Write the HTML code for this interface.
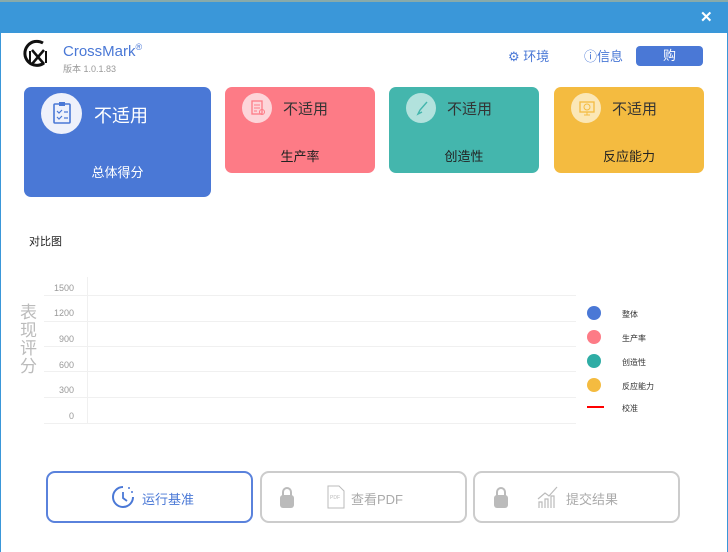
<!DOCTYPE html>
<html><head><meta charset="utf-8"><style>
*{margin:0;padding:0;box-sizing:border-box}
body{width:728px;height:552px;position:relative;overflow:hidden;background:#fff;font-family:"Liberation Sans","Noto Sans CJK SC",sans-serif}
.abs{position:absolute}
.card{position:absolute;border-radius:7px}
.circ{position:absolute;border-radius:50%}
.cv{position:absolute;font-size:15px;color:#333}
.cl{position:absolute;font-size:13px;color:#222;width:100%;text-align:center}
.yl{position:absolute;font-size:9px;color:#999;width:30px;text-align:right;left:44px}
.gl{position:absolute;left:44px;width:532px;height:1px;background:#f0f0f0}
.lg{position:absolute;left:587px;width:14px;height:14px;border-radius:50%}
.lt{position:absolute;left:622px;font-size:8px;color:#333}
.btn{position:absolute;top:471px;height:52px;width:207px;border:2px solid #ccc;border-radius:9px}
</style></head><body>
<div class="abs" style="left:0;top:0;width:728px;height:2px;background:#8aa"></div>
<div class="abs" style="left:0;top:2px;width:728px;height:31px;background:#3a97d9"></div>
<div class="abs" style="left:0;top:33px;width:1px;height:519px;background:#3a97d9"></div>
<div class="abs" style="left:727px;top:33px;width:1px;height:519px;background:#3a97d9"></div>
<div class="abs" style="left:700px;top:8px;color:#fff;font-size:15px;font-weight:bold">✕</div>

<svg class="abs" style="left:22px;top:38px" width="30" height="30" viewBox="0 0 30 30"><path d="M21 5 A12 12 0 1 0 22 25" fill="none" stroke="#111" stroke-width="3"/><path d="M10 12 L22 26 M22 12 L10 26" stroke="#111" stroke-width="2.5"/><path d="M8 13 V25 M24 13 V25" stroke="#111" stroke-width="2"/></svg>
<div class="abs" style="left:63px;top:42px;font-size:15px;color:#4a78d6">CrossMark<sup style="font-size:9px">®</sup></div>
<div class="abs" style="left:63px;top:62px;font-size:9px;color:#999">版本 1.0.1.83</div>

<div class="abs" style="left:508px;top:46px;font-size:13px;color:#4a78d6">⚙ 环境</div>
<div class="abs" style="left:584px;top:46px;font-size:13px;color:#4a78d6">ⓘ信息</div>
<div class="abs" style="left:636px;top:46px;width:67px;height:20px;background:#4a78d6;border-radius:4px;color:#fff;font-size:13px;text-align:center;line-height:20px">购</div>

<div class="card" style="left:24px;top:87px;width:187px;height:110px;background:#4a78d6">
<div class="circ" style="left:17px;top:6px;width:41px;height:41px;background:#eef1fb"></div>
<svg class="abs" style="left:27px;top:14px" width="22" height="24"><rect x="3" y="3" width="16" height="19" rx="1" fill="none" stroke="#4a78d6" stroke-width="1.6"/><rect x="8" y="1" width="6" height="4" fill="#4a78d6"/><path d="M6 10l2 2 3-3M6 16l2 2 3-3M13 11h4M13 17h4" stroke="#4a78d6" stroke-width="1.2" fill="none"/></svg>
<div class="cv" style="left:70px;top:15px;font-size:18px;color:#fff">不适用</div>
<div class="cl" style="top:75px;color:#fff">总体得分</div></div>

<div class="card" style="left:225px;top:87px;width:150px;height:86px;background:#fd7b86">
<div class="circ" style="left:17px;top:6px;width:30px;height:30px;background:#fdd5d9"></div>
<svg class="abs" style="left:25px;top:13px" width="16" height="16"><rect x="2" y="1" width="10" height="13" fill="none" stroke="#fd7b86" stroke-width="1.3"/><path d="M4 5h6M4 8h6M4 11h3" stroke="#fd7b86"/><circle cx="12" cy="12" r="2.5" fill="none" stroke="#fd7b86"/></svg>
<div class="cv" style="left:58px;top:11px">不适用</div>
<div class="cl" style="top:59px">生产率</div></div>

<div class="card" style="left:389px;top:87px;width:150px;height:86px;background:#44b6ad">
<div class="circ" style="left:17px;top:6px;width:30px;height:30px;background:#b2e2dd"></div>
<svg class="abs" style="left:25px;top:13px" width="16" height="16"><path d="M13 2L6 10M6 10l-2 4 4-2" stroke="#44b6ad" stroke-width="1.4" fill="none"/></svg>
<div class="cv" style="left:58px;top:11px">不适用</div>
<div class="cl" style="top:59px">创造性</div></div>

<div class="card" style="left:554px;top:87px;width:150px;height:86px;background:#f4bb40">
<div class="circ" style="left:17px;top:6px;width:30px;height:30px;background:#fbe7b6"></div>
<svg class="abs" style="left:25px;top:13px" width="16" height="16"><rect x="1" y="2" width="14" height="10" fill="none" stroke="#f4bb40" stroke-width="1.3"/><circle cx="8" cy="7" r="3" fill="none" stroke="#f4bb40"/><path d="M8 12v3M5 15h6" stroke="#f4bb40"/></svg>
<div class="cv" style="left:58px;top:11px">不适用</div>
<div class="cl" style="top:59px">反应能力</div></div>

<div class="abs" style="left:29px;top:233px;font-size:11px;color:#222">对比图</div>
<div class="abs" style="left:20px;top:304px;width:18px;font-size:17px;line-height:18px;color:#bbb">表现评分</div>

<div class="yl" style="top:283px">1500</div><div class="gl" style="top:295px"></div>
<div class="yl" style="top:308px">1200</div><div class="gl" style="top:321px"></div>
<div class="yl" style="top:334px">900</div><div class="gl" style="top:346px"></div>
<div class="yl" style="top:360px">600</div><div class="gl" style="top:371px"></div>
<div class="yl" style="top:385px">300</div><div class="gl" style="top:397px"></div>
<div class="yl" style="top:411px">0</div><div class="gl" style="top:423px"></div>
<div class="abs" style="left:87px;top:277px;width:1px;height:146px;background:#f0f0f0"></div>

<div class="lg" style="top:306px;background:#4a78d6"></div><div class="lt" style="top:309px">整体</div>
<div class="lg" style="top:330px;background:#fd7b86"></div><div class="lt" style="top:333px">生产率</div>
<div class="lg" style="top:354px;background:#2fada5"></div><div class="lt" style="top:357px">创造性</div>
<div class="lg" style="top:378px;background:#f4bb40"></div><div class="lt" style="top:381px">反应能力</div>
<div class="abs" style="left:587px;top:406px;width:17px;height:2px;background:#f00"></div><div class="lt" style="top:403px">校准</div>

<div class="btn" style="left:46px;border-color:#5a82dc"></div>
<svg class="abs" style="left:111px;top:485px" width="24" height="24"><path d="M12 2 A10 10 0 1 0 22 12" fill="none" stroke="#4a78d6" stroke-width="2"/><path d="M12 7v6l4 3" stroke="#4a78d6" stroke-width="1.8" fill="none"/><circle cx="21" cy="7" r="1" fill="#4a78d6"/><circle cx="18" cy="3" r="1" fill="#4a78d6"/></svg>
<div class="abs" style="left:142px;top:489px;font-size:13px;color:#4a78d6">运行基准</div>

<div class="btn" style="left:260px"></div>
<svg class="abs" style="left:279px;top:486px" width="16" height="24"><path d="M4 10V6a4 4 0 0 1 8 0v4" stroke="#bbb" stroke-width="2" fill="none"/><rect x="1" y="9" width="14" height="13" rx="3" fill="#bbb"/></svg>
<svg class="abs" style="left:327px;top:485px" width="18" height="24"><path d="M1 1h11l5 5v17H1z" fill="none" stroke="#bbb"/><text x="3" y="14" font-size="5" fill="#bbb" font-family="Liberation Sans">PDF</text></svg>
<div class="abs" style="left:351px;top:489px;font-size:13px;color:#aaa">查看PDF</div>

<div class="btn" style="left:473px"></div>
<svg class="abs" style="left:493px;top:486px" width="16" height="24"><path d="M4 10V6a4 4 0 0 1 8 0v4" stroke="#bbb" stroke-width="2" fill="none"/><rect x="1" y="9" width="14" height="13" rx="3" fill="#bbb"/></svg>
<svg class="abs" style="left:537px;top:485px" width="22" height="24"><path d="M2 23v-6h3v6M8 23v-9h3v9M14 23v-12h3v12M1 14l7-6 4 3 8-9" stroke="#bbb" fill="none" stroke-width="1.2"/></svg>
<div class="abs" style="left:566px;top:489px;font-size:13px;color:#aaa">提交结果</div>
</body></html>
